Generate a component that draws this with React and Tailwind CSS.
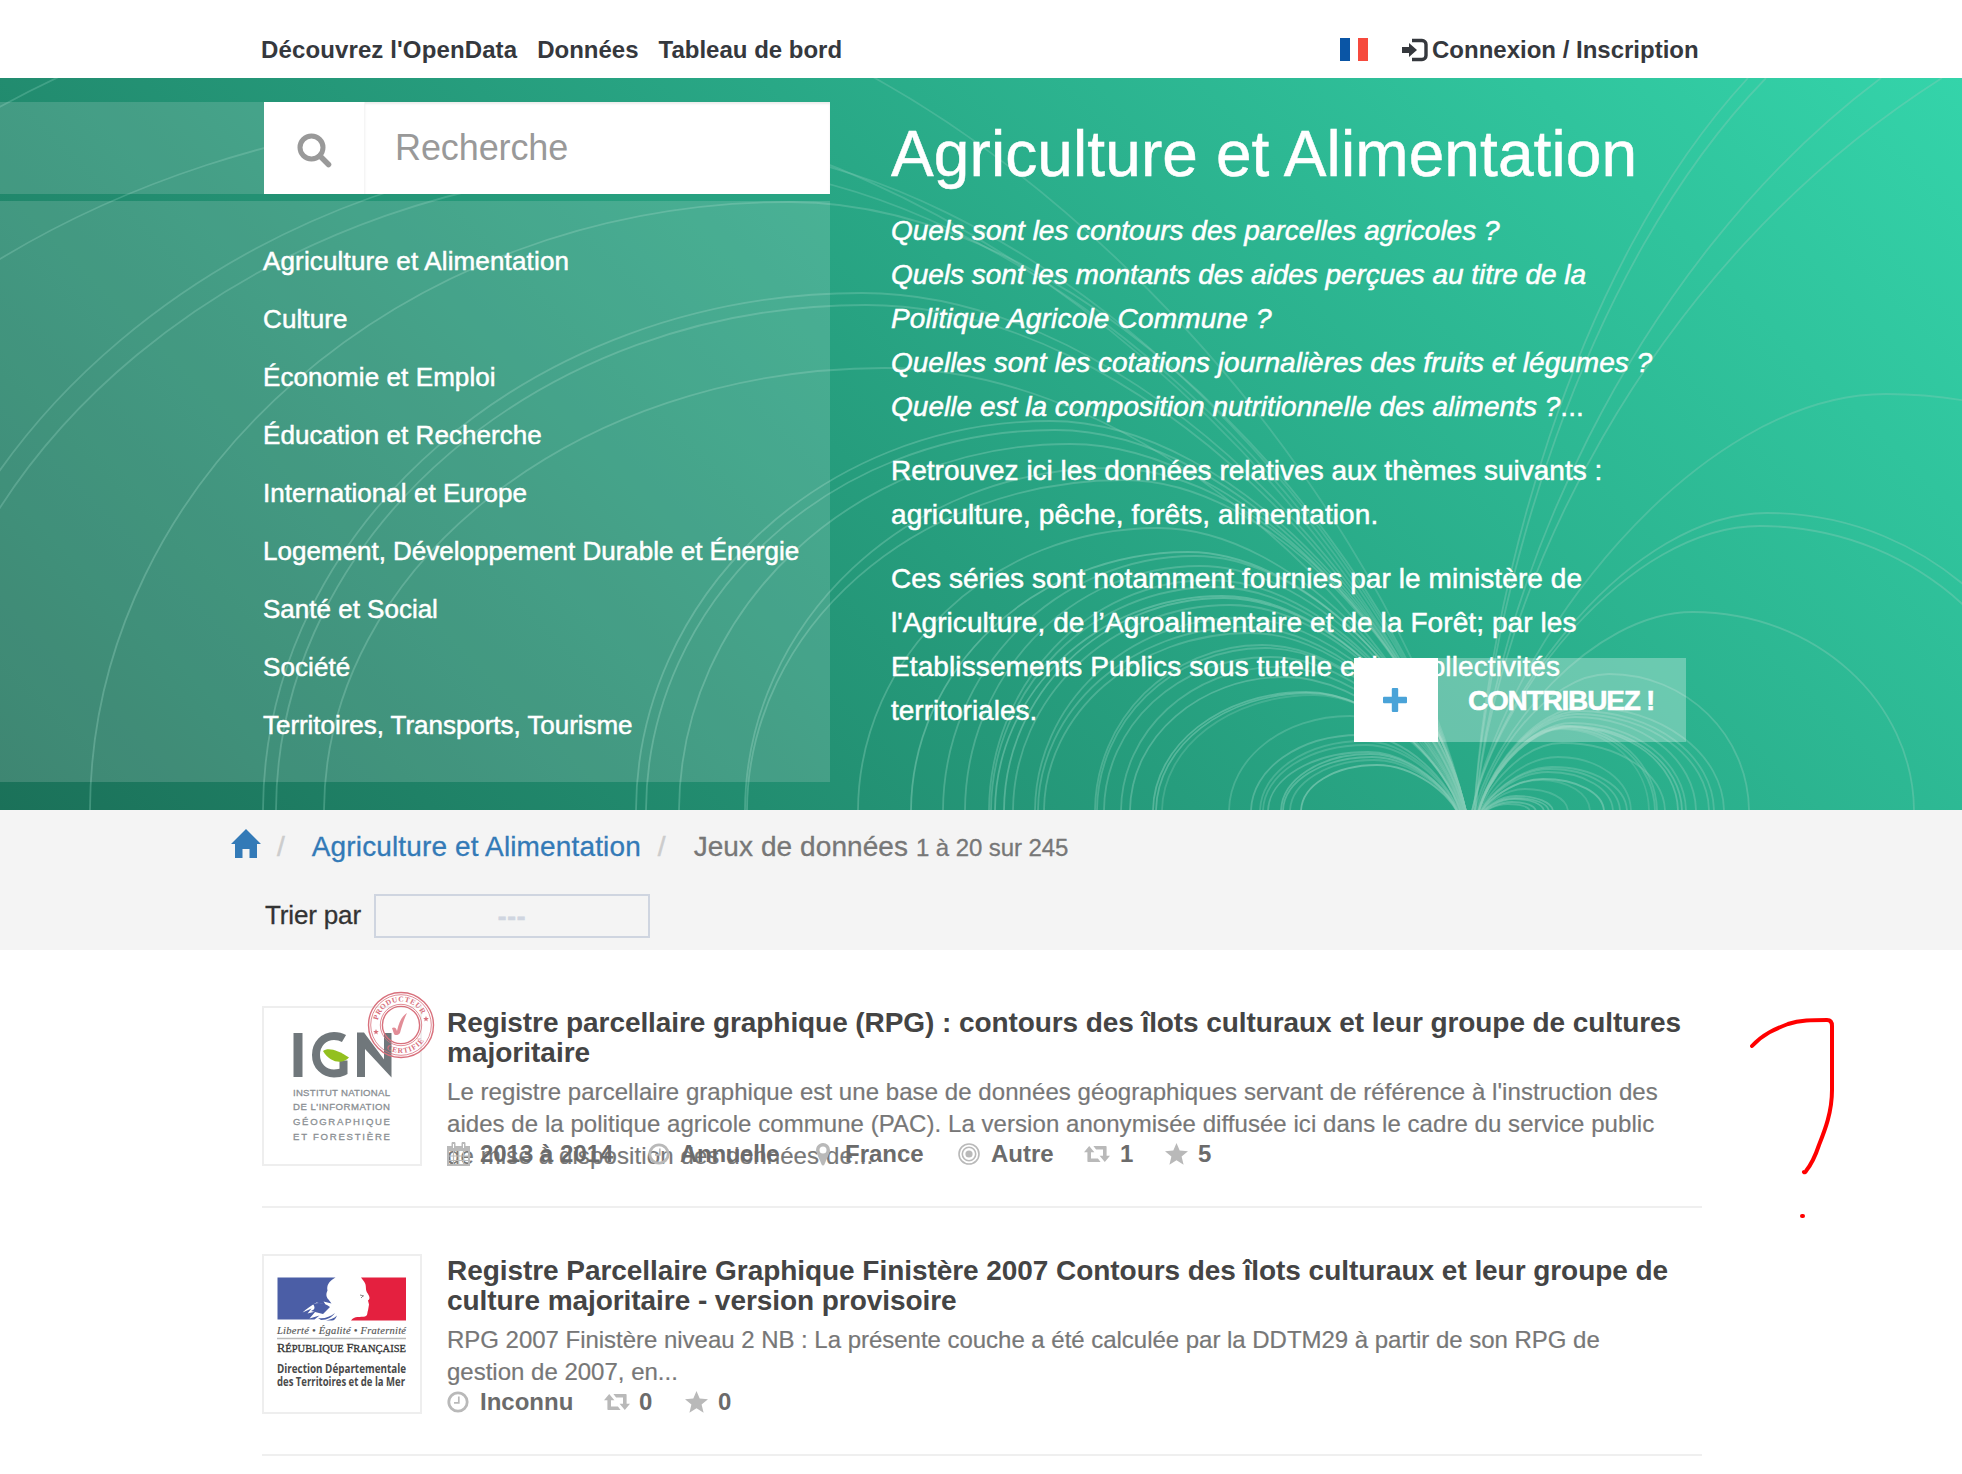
import React from "react";

// [foot x, apex x, apex y, opacity], in hero coordinates
const ARCS = [
  [-450, 520, -102, 0.32], [-350, 559, 32, 0.32], [-112, 678, 67, 0.32], [-92, 688, 87, 0.32],
  [90, 790, 124, 0.36], [263, 862, 215, 0.36], [276, 866, 227, 0.36], [324, 885, 290, 0.36],
  [636, 1050, 343, 0.4], [646, 1055, 352, 0.4], [679, 1070, 366, 0.4], [745, 1110, 390, 0.4],
  [747, 1124, 402, 0.4], [858, 1158, 450, 0.4],
  [911, 1188, 474, 0.5], [943, 1195, 478, 0.4], [965, 1200, 488, 0.4], [989, 1210, 502, 0.4],
  [991, 1215, 509, 0.4], [995, 1222, 518, 0.5], [1004, 1224, 520, 0.5], [1013, 1230, 527, 0.4],
  [1035, 1240, 540, 0.4], [1038, 1245, 549, 0.4], [1044, 1250, 555, 0.4], [1095, 1262, 567, 0.4],
  [1097, 1265, 570, 0.4], [1104, 1270, 579, 0.4], [1121, 1278, 589, 0.4], [1130, 1285, 599, 0.45],
  [1153, 1306, 614, 0.5], [1156, 1310, 615, 0.5], [1162, 1314, 617, 0.3], [1229, 1350, 638, 0.35],
  [1251, 1360, 657, 0.45], [1260, 1364, 663, 0.35], [1263, 1366, 667, 0.35], [1268, 1368, 674, 0.45],
  [1281, 1370, 676, 0.5], [1283, 1372, 679, 0.5], [1290, 1374, 682, 0.35], [1301, 1377, 687, 0.65],
  [1914, 1693, 534, 0.4], [1749, 1609, 596, 0.4], [1724, 1584, 629, 0.4], [1714, 1580, 633, 0.4],
  [1709, 1577, 636, 0.4], [1696, 1575, 639, 0.4], [1686, 1572, 645, 0.4], [1682, 1570, 648, 0.5],
  [1678, 1569, 649, 0.5], [1665, 1562, 665, 0.4], [1657, 1564, 648, 0.4], [1655, 1562, 650, 0.4],
  [1649, 1560, 651, 0.3], [1631, 1558, 679, 0.35], [1627, 1552, 689, 0.4],
  [1620, 1550, 691, 0.4], [1613, 1548, 694, 0.4], [1604, 1543, 701, 0.6], [1590, 1540, 702, 0.3],
  [1568, 1525, 711, 0.35], [1553, 1516, 718, 0.5], [1549, 1515, 720, 0.5], [1544, 1514, 721, 0.5],
  [1536, 1512, 724, 0.5], [1530, 1508, 726, 0.4],
  [2070, 1767, 435, 0.4], [2055, 1760, 448, 0.4], [2330, 1886, 316, 0.36],
];

const RAYS = [
  "M1474 736C1487 522 1570 192 1748 0", "M1474 736C1489 522 1580 192 1766 0",
  "M1475 736C1492 522 1625 192 1881 0", "M1475 736C1494 522 1640 192 1942 0",
];

function arcPath([fx, ax, ay]) {
  const side = fx < 1470 ? -1 : 1;
  const h = 732 - ay;
  const hx = 1469 + side * (2 + 10 * (1 - Math.min(1, h / 260)));
  const hy = 738;
  const wl = ax - fx;
  const wr = hx - ax;
  const H = hy - ay;
  return `M${fx} 734C${fx} ${732 - h * 0.55} ${ax - wl * 0.55} ${ay} ${ax} ${ay}C${ax + wr * 0.46} ${ay} ${hx - wr * 0.08} ${hy - H * 0.4} ${hx} ${hy}`;
}

function HeroLines() {
  return (
    <svg className="absolute inset-0 h-full w-full" viewBox="0 0 1962 732" fill="none" stroke="#84cdb7" strokeWidth="1.8">
      {ARCS.map((a, i) => <path key={i} d={arcPath(a)} strokeOpacity={a[3]} />)}
      {RAYS.map((d) => <path key={d} d={d} strokeOpacity="0.4" />)}
    </svg>
  );
}

const THEMES = [
  ["Agriculture et Alimentation", "tracking-[0.15px]"],
  ["Culture", "tracking-[0.1px]"],
  ["Économie et Emploi", "tracking-[0.08px]"],
  ["Éducation et Recherche", "tracking-[0.06px]"],
  ["International et Europe", "tracking-[0.04px]"],
  ["Logement, Développement Durable et Énergie", "tracking-normal"],
  ["Santé et Social", "tracking-normal"],
  ["Société", "tracking-[0.1px]"],
  ["Territoires, Transports, Tourisme", "tracking-[-0.04px]"],
];

function Calendar() {
  return (
    <svg className="h-[24px] w-[23px]" viewBox="0 0 23 24" fill="none" stroke="currentColor">
      <path d="M1 5h21v18H1z" strokeWidth="2" />
      <path d="M0 4h23v5H0z" fill="currentColor" stroke="none" />
      <path d="M1 14h21M1 18.500h21M6.500 9v14M11.500 9v14M16.500 9v14" strokeWidth="1.200" />
      <path d="M6.500 1.500v4M16.500 1.500v4" strokeWidth="4" strokeLinecap="round" />
      <path d="M6.500 2v4M16.500 2v4" stroke="#fff" strokeWidth="1" />
    </svg>
  );
}
function Clock() {
  return (
    <svg className="h-[22px] w-[22px]" viewBox="0 0 22 22" fill="none" stroke="currentColor">
      <circle cx="11" cy="11" r="9.200" strokeWidth="2.800" />
      <path d="M11.800 5.500v6.300H7" strokeWidth="1.700" />
    </svg>
  );
}
function Pin() {
  return (
    <svg className="h-[23px] w-[14px]" viewBox="0 0 14 23" fill="currentColor">
      <path fillRule="evenodd" d="M7 0a7 7 0 0 1 7 7c0 1.200-.3 2.200-.8 3.200L8.400 21.500c-.5 1.200-2.300 1.200-2.800 0L.8 10.200A7 7 0 0 1 7 0zm0 3.500a3.500 3.500 0 1 0 0 7 3.500 3.500 0 0 0 0-7z" />
    </svg>
  );
}
function Target() {
  return (
    <svg className="h-[22px] w-[22px]" viewBox="0 0 22 22" fill="none" stroke="currentColor" strokeWidth="1.600">
      <circle cx="11" cy="11" r="10" />
      <circle cx="11" cy="11" r="6.700" />
      <circle cx="11" cy="11" r="3.600" fill="currentColor" stroke="none" />
    </svg>
  );
}
function Retweet() {
  return (
    <svg className="h-[16px] w-[26px]" viewBox="0 0 26 16" fill="currentColor">
      <path d="M5.200 0L0 6.300h3.400V15c0 .6.400 1 1 1h12.200l-2.700-3.400H7V6.300h3.400z" />
      <path d="M20.800 16L26 9.700h-3.400V1c0-.6-.4-1-1-1H9.400l2.700 3.400H19v6.300h-3.400z" />
    </svg>
  );
}
function Star() {
  return (
    <svg className="h-[22px] w-[23px]" viewBox="0 0 23 22" fill="currentColor">
      <path d="M11.500 0l3.200 7.600 8.300.6-6.400 5.300 2 8.200-7.100-4.400-7.100 4.400 2-8.200L0 8.200l8.300-.6z" />
    </svg>
  );
}

const ICONS = { calendar: Calendar, clock: Clock, pin: Pin, target: Target, retweet: Retweet, star: Star };

function Meta({ items }) {
  return (
    <div className="absolute left-0 top-[130px] flex h-[36px] items-center text-[24px] font-bold text-[#6b6b6b]">
      {items.map(([icon, text, cls]) => {
        const Icon = ICONS[icon];
        return (
          <span key={icon} className={"flex items-center whitespace-nowrap " + cls}>
            <span className="text-[#b9b9b9]"><Icon /></span>
            {text}
          </span>
        );
      })}
    </div>
  );
}

function Stamp() {
  return (
    <svg className="absolute left-[103px] top-[-17px] h-[68px] w-[68px]" viewBox="-34 -34 68 68" fill="none" stroke="#d8707c">
      <circle r="32.500" strokeWidth="1.400" />
      <circle r="30.300" strokeWidth=".8" />
      <circle r="20.700" strokeWidth=".8" />
      <circle r="18.600" strokeWidth="1.400" />
      <path d="M-9 3c2-1 4-1 5 3C-2-3 1-9 6-12c-3 6-5 13-7 20-1 2-5 3-6 1z" fill="#e28d97" stroke="none" />
      <defs>
        <path id="stampTop" d="M-23.500 0A23.500 23.500 0 0 1 23.500 0" />
        <path id="stampBottom" d="M-28 0A28 28 0 0 0 28 0" />
      </defs>
      <g fill="#d8707c" stroke="none" fontFamily="Liberation Serif, serif" fontWeight="bold" fontSize="7.500">
        <text textAnchor="middle" letterSpacing=".5"><textPath href="#stampTop" startOffset="46%">PRODUCTEUR</textPath></text>
        <text textAnchor="middle" letterSpacing="1"><textPath href="#stampBottom" startOffset="57%">CERTIFIÉ</textPath></text>
        <path d="M25-9l.8 2 2 .1-1.600 1.300.5 2L25-4.700l-1.700 1.100.5-2-1.600-1.300 2-.1zM-25 4l.8 2 2 .1-1.600 1.300.5 2L-25 8.300l-1.700 1.100.5-2-1.600-1.300 2-.1z" />
      </g>
    </svg>
  );
}

function IgnLogo() {
  return (
    <svg className="h-[156px] w-[156px]" viewBox="264 1008 156 156">
      <g fill="none" stroke="#70777b">
        <path d="M298 1033v44" strokeWidth="9" />
        <path d="M344 1038.500c-3-1.800-6-2.600-10-2.600-10 0-18 8-18 19s8 18.500 18 18.500c4 0 7-.6 9.500-1.800v-11" strokeWidth="8" />
      </g>
      <path d="M357 1077v-44.500h7l20 27V1033h7.500v44.500L365 1049v28z" fill="#70777b" />
      <path d="M323 1051c5-4 15-1 26 6.500-5 6-18 7-26-6.500z" fill="#93c01f" />
      <g fill="#8a8f93" stroke="#8a8f93" strokeWidth=".3" fontFamily="Liberation Sans, sans-serif" fontSize="9.600">
        <text x="293" y="1095.500" textLength="97">INSTITUT NATIONAL</text>
        <text x="293" y="1110" textLength="97">DE L'INFORMATION</text>
        <text x="293" y="1125" textLength="97">GÉOGRAPHIQUE</text>
        <text x="293" y="1140" textLength="97">ET FORESTIÈRE</text>
      </g>
    </svg>
  );
}

function MarianneLogo() {
  return (
    <svg className="h-[156px] w-[156px]" viewBox="264 1256 156 156">
      <path d="M277.500 1277.500h58c-7 4-9 8-8 13-2 4-1 7 1 9l3 4-8-2 2 3-9-2c-5 3-10 6-14 10l9-4-4 5 8-2-6 7 10-3-5 4h-37z" fill="#4b5ea6" />
      <path d="M361 1277.500h45v43h-55c3-5 10-3 14-4 3-1 2-4 3-6l1-6-1-4c3-2 1-5-1-8-2-4 0-7-3-11z" fill="#e4203f" />
      <path d="M313 1304c6-2 12-1 17 3l-7 7-12-3c3-1 5-3 2-7zM318 1318c6 1 12-1 17-5-3 4-7 7-14 7zM326 1320.500c4-1 8-2 11-5-1 3-3 5-5 5z" fill="#4b5ea6" />
      <path d="M360 1295l4 1M361 1298l2-2" stroke="#888" strokeWidth="1" />
      <path d="M277 1338.500h129" stroke="#bbb" strokeWidth="1.300" />
      <g fontFamily="Liberation Serif, serif">
        <text x="277" y="1333.500" fontSize="10.500" fontStyle="italic" textLength="129" fill="#555" stroke="#555" strokeWidth=".15">Liberté • Égalité • Fraternité</text>
        <text x="277" y="1351.500" fontSize="11" fill="#333" stroke="#333" strokeWidth=".3" textLength="129" lengthAdjust="spacingAndGlyphs">
          <tspan fontSize="13">R</tspan>ÉPUBLIQUE <tspan fontSize="13">F</tspan>RANÇAISE
        </text>
      </g>
      <g fontFamily="Open Sans, sans-serif" fontWeight="bold" fontSize="11.500" fill="#4a4a4a">
        <text x="277" y="1372.500" textLength="129" lengthAdjust="spacingAndGlyphs">Direction  Départementale</text>
        <text x="277" y="1386" textLength="128" lengthAdjust="spacingAndGlyphs">des Territoires et de la Mer</text>
      </g>
    </svg>
  );
}

function Result({ logo, stamp, title, desc, meta }) {
  return (
    <article className="flex h-[202px] gap-[25px] border-b-2 border-[#efefef]">
      <div className="relative h-[160px] w-[160px] shrink-0 border-2 border-[#eee]">
        {logo}
        {stamp && <Stamp />}
      </div>
      <div className="relative h-[160px] grow whitespace-nowrap">
        <h2 className="pt-[2px] text-[28px] font-bold leading-[30px] text-[#444]">
          {title.map(([t, c]) => <span key={t} className={"block " + c}>{t}</span>)}
        </h2>
        <p className="pt-[8px] text-[24px] leading-[32px] text-[#777] [-webkit-text-stroke:0.2px_#777]">
          {desc.map(([t, c]) => <span key={t} className={"block " + c}>{t}</span>)}
        </p>
        <Meta items={meta} />
      </div>
    </article>
  );
}

export default function App() {
  return (
    <div className="relative h-[1474px] w-[1962px] overflow-hidden bg-white font-['Liberation_Sans',Arial,sans-serif] text-[#333]">
      <header className="flex h-[78px] items-center whitespace-nowrap pl-[261px] pt-[21px] text-[24px] font-bold text-[#35383d]">
        <nav className="flex h-[58px] w-[1079px] items-center gap-[20px]">
          <a className="tracking-[0.12px]">Découvrez l'OpenData</a>
          <a>Données</a>
          <a>Tableau de bord</a>
        </nav>
        <span className="flex h-[23px] w-[28px] justify-between">
          <i className="w-[10px] bg-[#0a55a5]" />
          <i className="w-[10px] bg-[#f64a3d]" />
        </span>
        <a className="ml-[34px] flex items-center gap-[4px]">
          <svg className="h-[24px] w-[26px]" viewBox="0 0 26 24" fill="none" stroke="currentColor" strokeWidth="3.400">
            <path d="M10 2.500h10a4 4 0 0 1 4 4v11a4 4 0 0 1-4 4h-10" />
            <path d="M0 9h7V5l8 7-8 7v-4H0z" fill="currentColor" stroke="none" />
          </svg>
          Connexion / Inscription
        </a>
      </header>

      <section className="relative h-[732px] overflow-hidden bg-[linear-gradient(45deg,#1b7159,#34d4aa)] text-white">
        <HeroLines />
        <div className="relative flex pt-[24px]">
          <div className="w-[830px]">
            <div className="flex h-[92px]">
              <div className="w-[264px] bg-[#f0f0f0]/17" />
              <div className="flex grow bg-white">
                <div className="flex w-[101px] items-center justify-center border-r border-[#f5f5f5] text-[#999]">
                  <svg className="mt-[4px] h-[35px] w-[35px]" viewBox="0 0 35 35" fill="none" stroke="currentColor">
                    <circle cx="14.500" cy="14.500" r="11.500" strokeWidth="5" />
                    <path d="M23 23l8.500 8.500" strokeWidth="5.500" strokeLinecap="round" />
                  </svg>
                </div>
                <div className="flex grow items-center pl-[30px] text-[36px] tracking-[-0.1px] text-[#999] shadow-[inset_0_2px_2px_rgba(0,0,0,0.08)]">
                  Recherche
                </div>
              </div>
            </div>
            <ul className="mt-[7px] h-[581px] whitespace-nowrap bg-[#f0f0f0]/17 pl-[263px] pt-[31px] text-[26px] leading-[58px] [-webkit-text-stroke:0.5px_#fff]">
              {THEMES.map(([t, c]) => <li key={t} className={c}>{t}</li>)}
            </ul>
          </div>
          <div className="whitespace-nowrap pl-[61px] pt-[11px] text-[28px] leading-[44px] [-webkit-text-stroke:0.5px_#fff]">
            <h1 className="mb-[13px] text-[64px] leading-[83px] tracking-[0.1px]">Agriculture et Alimentation</h1>
            <p className="mb-[20px]">
              <em className="block">Quels sont les contours des parcelles agricoles ?</em>
              <em className="block tracking-[-0.04px]">Quels sont les montants des aides perçues au titre de la</em>
              <em className="block tracking-[0.18px]">Politique Agricole Commune ?</em>
              <em className="block">Quelles sont les cotations journalières des fruits et légumes ?</em>
              <span className="tracking-[0.03px]"><em>Quelle est la composition nutritionnelle des aliments ?</em>...</span>
            </p>
            <p className="mb-[20px]">
              Retrouvez ici les données relatives aux thèmes suivants :
              <span className="block tracking-[0.12px]">agriculture, pêche, forêts, alimentation.</span>
            </p>
            <p>
              <span className="block tracking-[0.09px]">Ces séries sont notamment fournies par le ministère de</span>
              <span className="block tracking-[0.08px]">l'Agriculture, de l’Agroalimentaire et de la Forêt; par les</span>
              <span className="block tracking-[0.11px]">Etablissements Publics sous tutelle et les collectivités</span>
              territoriales.
            </p>
          </div>
        </div>
        <a className="absolute left-[1354px] top-[580px] flex h-[84px] w-[332px] items-center whitespace-nowrap bg-white/30 text-[28px] font-bold">
          <span className="flex h-[84px] w-[84px] items-center justify-center bg-white">
            <svg className="mr-[2px] h-[24px] w-[24px]" viewBox="0 0 24 24" fill="#4aa3d8">
              <rect x="8.800" width="6.400" height="24" rx="1" />
              <rect y="8.800" width="24" height="6.400" rx="1" />
            </svg>
          </span>
          <span className="pl-[30px] pt-[1px] tracking-[-1.2px] [-webkit-text-stroke:0.5px_#fff]">CONTRIBUEZ !</span>
        </a>
      </section>

      <section className="h-[140px] whitespace-nowrap bg-[#f4f4f4]">
        <div className="flex h-[74px] items-center pl-[231px] text-[28px] text-[#777]">
          <svg className="mb-[7px] h-[29px] w-[30px]" viewBox="0 0 30 29" fill="#337ab7">
            <path d="M15 0l15 15h-4v14h-7.500v-9h-7v9H4V15H0z" />
          </svg>
          <span className="ml-[16px] text-[#ccc] [-webkit-text-stroke:0.5px_#ccc]">/</span>
          <a className="ml-[27px] tracking-[0.14px] text-[#337ab7] [-webkit-text-stroke:0.3px_#337ab7]">Agriculture et Alimentation</a>
          <span className="ml-[17px] text-[#ccc] [-webkit-text-stroke:0.5px_#ccc]">/</span>
          <span className="ml-[28px] tracking-[0.08px] [-webkit-text-stroke:0.3px_#777]">Jeux de données <span className="text-[24px] tracking-[-0.08px]">1 à 20 sur 245</span></span>
        </div>
        <div className="flex items-center pl-[265px] pt-[10px] text-[26px]">
          <span className="w-[109px] pb-[2px] tracking-[-0.15px] [-webkit-text-stroke:0.3px_#333]">Trier par</span>
          <div className="flex h-[44px] w-[276px] items-center justify-center border-2 border-[#cfd5e0] font-bold tracking-[0.9px] text-[#cfd5e0] [-webkit-text-stroke:0.6px_#cfd5e0]">---</div>
        </div>
      </section>

      <main className="ml-[262px] flex w-[1440px] flex-col gap-[46px] pt-[56px]">
        <Result
          logo={<IgnLogo />}
          stamp
          title={[
            ["Registre parcellaire graphique (RPG) : contours des îlots culturaux et leur groupe de cultures", "tracking-[-0.08px]"],
            ["majoritaire", ""],
          ]}
          desc={[
            ["Le registre parcellaire graphique est une base de données géographiques servant de référence à l'instruction des", "tracking-[0.06px]"],
            ["aides de la politique agricole commune (PAC). La version anonymisée diffusée ici dans le cadre du service public", "tracking-[0.055px]"],
            ["de mise à disposition des données de...", "tracking-[0.12px]"],
          ]}
          meta={[
            ["calendar", "2013 à 2014", "gap-[10px] w-[201px]"],
            ["clock", "Annuelle", "gap-[10px] w-[168px] tracking-[-0.3px]"],
            ["pin", "France", "gap-[15px] w-[142px]"],
            ["target", "Autre", "gap-[11px] w-[126px]"],
            ["retweet", "1", "gap-[10px] w-[81px]"],
            ["star", "5", "gap-[10px]"],
          ]}
        />
        <Result
          logo={<MarianneLogo />}
          title={[
            ["Registre Parcellaire Graphique Finistère 2007 Contours des îlots culturaux et leur groupe de", "tracking-[-0.055px]"],
            ["culture majoritaire - version provisoire", "tracking-[-0.06px]"],
          ]}
          desc={[
            ["RPG 2007 Finistère niveau 2 NB : La présente couche a été calculée par la DDTM29 à partir de son RPG de", "tracking-[-0.025px]"],
            ["gestion de 2007, en...", ""],
          ]}
          meta={[
            ["clock", "Inconnu", "gap-[11px] w-[157px]"],
            ["retweet", "0", "gap-[9px] w-[81px]"],
            ["star", "0", "gap-[10px]"],
          ]}
        />
      </main>

      <svg className="absolute left-[1740px] top-[1010px] h-[220px] w-[110px]" viewBox="1740 1010 110 220" fill="none" stroke="#f00" strokeWidth="4" strokeLinecap="round">
        <path d="M1752 1046C1763 1034 1775 1029 1788 1024C1800 1020 1812 1020 1827 1020Q1832 1020 1832 1026V1090C1832 1112 1825 1130 1819 1145C1814 1160 1810 1166 1806 1171Q1805 1173 1804 1172" />
        <path d="M1802 1216h1" />
      </svg>
    </div>
  );
}
